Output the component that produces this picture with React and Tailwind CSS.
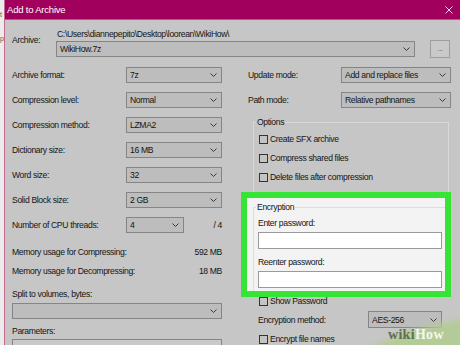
import React from "react";

const Chevron = () => (
  <svg width="7" height="4" viewBox="0 0 7 4" className="shrink-0">
    <path d="M0.5 0.5 L3.5 3.5 L6.5 0.5" fill="none" stroke="#3a3a3a" strokeWidth="1" />
  </svg>
);

const Combo = ({ value = "", className = "" }) => (
  <div className={"h-[16px] flex items-center justify-between border border-[#858585] bg-[#bdbdbd] pl-[3px] pr-[4px] " + className}>
    <span>{value}</span>
    <Chevron />
  </div>
);

const Check = ({ label }) => (
  <div className="h-[10px] flex items-center gap-[2px]">
    <div className="w-[9px] h-[9px] border border-[#333] bg-[#c4c4c4]" />
    <span>{label}</span>
  </div>
);

const Row = ({ label, children }) => (
  <div className="h-[16px] flex items-center justify-between">
    <span>{label}</span>
    {children}
  </div>
);

export default function App() {
  return (
    <div className="w-[460px] h-[345px] relative overflow-hidden flex bg-[#ececec] text-[8.6px] tracking-[-0.35px] leading-[10px] text-[#141414] font-['Liberation_Sans',Arial,sans-serif]">
      <div className="w-[4px] shrink-0 flex flex-col text-[#555] text-[7px] pt-[10px] gap-[14px]">
        <span>t</span>
        <span>p</span>
      </div>
      <div className="flex-1 flex flex-col border-l border-[#c46a92]">
        <div className="h-[20px] shrink-0 flex items-center justify-between pl-[2px] pr-[7px] bg-[#a2005d] border-b border-[#b7558a] text-white text-[9.5px] tracking-[-0.2px]">
          <span>Add to Archive</span>
          <svg width="8" height="8" viewBox="0 0 8 8">
            <path d="M0.5 0.5 L7.5 7.5 M7.5 0.5 L0.5 7.5" stroke="#f4d8e8" strokeWidth="1" />
          </svg>
        </div>
        <div className="flex-1 bg-[#c6c6c6] pl-[7px] flex flex-col">
          <div className="mt-[9px] flex">
            <div className="w-[44px] pt-[6px]">Archive:</div>
            <div className="flex flex-col">
              <span className="ml-[1px]">C:\Users\diannepepito\Desktop\loorean\WikiHow\</span>
              <div className="mt-[2px] flex items-start">
                <Combo value="WikiHow.7z" className="w-[359px]" />
                <div className="ml-[15px] -mt-[1px] w-[20px] h-[18px] border border-[#9d9d9d] bg-[#c9c9c9] flex items-end justify-center pb-[3px] text-[7px] text-[#555]">
                  ...
                </div>
              </div>
            </div>
          </div>

          <div className="mt-[9px] flex">
            <div className="w-[210px] flex flex-col">
              <div className="flex flex-col gap-[9px]">
                <Row label="Archive format:"><Combo value="7z" className="w-[96px]" /></Row>
                <Row label="Compression level:"><Combo value="Normal" className="w-[96px]" /></Row>
                <Row label="Compression method:"><Combo value="LZMA2" className="w-[96px]" /></Row>
                <Row label="Dictionary size:"><Combo value="16 MB" className="w-[96px]" /></Row>
                <Row label="Word size:"><Combo value="32" className="w-[96px]" /></Row>
                <Row label="Solid Block size:"><Combo value="2 GB" className="w-[96px]" /></Row>
                <div className="h-[16px] flex items-center">
                  <span className="flex-1">Number of CPU threads:</span>
                  <Combo value="4" className="w-[58px]" />
                  <span className="w-[38px] text-right">/ 4</span>
                </div>
              </div>
              <div className="mt-[14px] h-[10px] flex justify-between">
                <span>Memory usage for Compressing:</span>
                <span>592 MB</span>
              </div>
              <div className="mt-[9px] h-[10px] flex justify-between">
                <span>Memory usage for Decompressing:</span>
                <span>18 MB</span>
              </div>
              <div className="mt-[13px] h-[10px]">Split to volumes, bytes:</div>
              <Combo className="mt-[4px] w-[210px]" />
              <div className="mt-[7px] h-[10px]">Parameters:</div>
              <div className="mt-[3px] h-[16px] border border-[#858585] bg-[#c9c9c9]" />
            </div>

            <div className="ml-[26px] w-[203px] flex flex-col">
              <Row label="Update mode:"><Combo value="Add and replace files" className="w-[110px]" /></Row>
              <div className="mt-[9px]">
                <Row label="Path mode:"><Combo value="Relative pathnames" className="w-[110px]" /></Row>
              </div>
              <fieldset className="mt-[9px] ml-[5px] w-[196px] border border-b-0 border-[#d8d8d8] pb-[10px]">
                <legend className="ml-[2px] px-[1px] leading-[10px]">Options</legend>
                <div className="pl-[5px] mt-[7px] flex flex-col gap-[9px]">
                  <Check label="Create SFX archive" />
                  <Check label="Compress shared files" />
                  <Check label="Delete files after compression" />
                </div>
              </fieldset>
              <div className="-ml-[7px] w-[210px] h-[105px] border-[6px] border-[#36e436] bg-[#f3f3f3] overflow-hidden">
                <fieldset className="mt-[4px] ml-[6px] w-[194px] h-[100px] border border-b-0 border-[#dddddd]">
                  <legend className="ml-[2px] px-[1px] leading-[10px]">Encryption</legend>
                  <div className="pl-[4px] flex flex-col">
                    <div className="mt-[6px] h-[10px]">Enter password:</div>
                    <div className="mt-[4px] w-[184px] h-[17px] border border-[#9a9a9a] bg-white" />
                    <div className="mt-[8px] h-[10px]">Reenter password:</div>
                    <div className="mt-[4px] w-[184px] h-[17px] border border-[#9a9a9a] bg-white" />
                  </div>
                </fieldset>
              </div>
              <div className="ml-[11px] -mt-[1px]">
                <Check label="Show Password" />
              </div>
              <div className="mt-[5px] ml-[10px] h-[17px] flex items-center">
                <span className="w-[110px]">Encryption method:</span>
                <Combo value="AES-256" className="w-[74px] h-[17px]" />
              </div>
              <div className="mt-[6px] ml-[11px]">
                <Check label="Encrypt file names" />
              </div>
            </div>
          </div>
        </div>
      </div>

      <div className="absolute left-[217px] top-[317px] w-[566px] h-[566px] rounded-full bg-[#b2cc93] blur-[3px] opacity-90" />
      <div className="absolute left-[388px] top-[326px] text-[14px] leading-[18px] font-bold font-['Liberation_Serif','DejaVu_Serif',serif] tracking-[0.3px]">
        <span className="text-[#5f6f50]">wiki</span>
        <span className="text-[#f6f6f0]">How</span>
      </div>
    </div>
  );
}
